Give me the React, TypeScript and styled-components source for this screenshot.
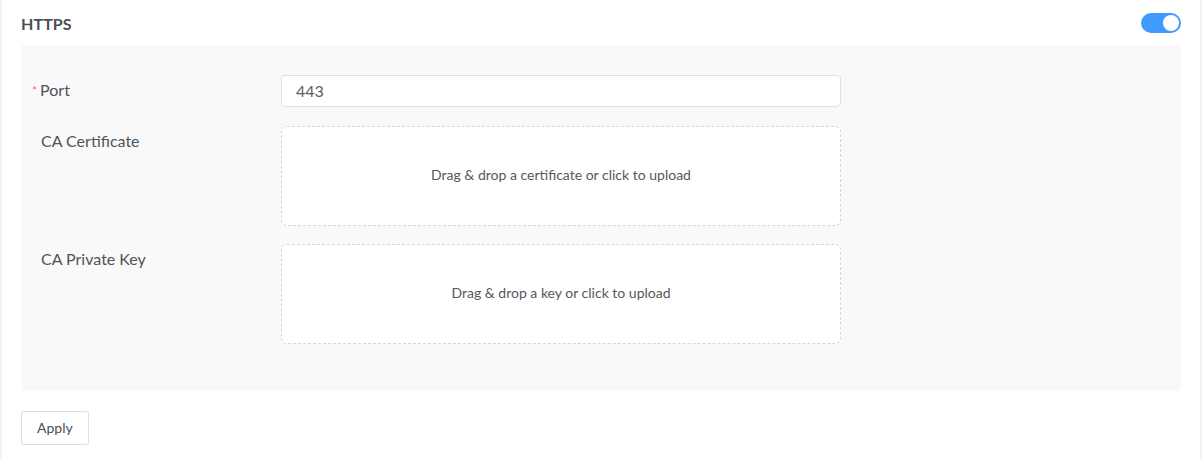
import React, { useState } from "react";
import styled, { createGlobalStyle } from "styled-components";

const Global = createGlobalStyle`
  html, body { margin: 0; padding: 0; background: #f2f3f6; }
  body { font-family: Lato, "Open Sans", "Liberation Sans", sans-serif; }
  * { box-sizing: border-box; }
`;

const Card = styled.div`
  margin: 0 2px;
  background: #ffffff;
  min-height: 459px;
  padding: 0 19px 14px;
`;

const Header = styled.div`
  height: 45px;
  display: flex;
  align-items: center;
  justify-content: space-between;
  padding-top: 1px;
`;

const Title = styled.h2`
  margin: 0;
  font-size: 16px;
  font-weight: 700;
  color: #4d4f53;
  letter-spacing: 0.1px;
`;

const Switch = styled.button<{ $on: boolean }>`
  width: 40px;
  height: 20px;
  border-radius: 10px;
  border: none;
  padding: 2px;
  background: ${(p) => (p.$on ? "#3f9cfd" : "#dcdfe6")};
  display: flex;
  justify-content: ${(p) => (p.$on ? "flex-end" : "flex-start")};
  cursor: pointer;
`;

const Knob = styled.span`
  width: 16px;
  height: 16px;
  border-radius: 50%;
  background: #fff;
`;

const Panel = styled.div`
  background: #f9f9f9;
  border-radius: 4px;
  padding: 30px 0 47px;
  display: flex;
  flex-direction: column;
  gap: 18px;
`;

const Row = styled.div<{ $center?: boolean }>`
  display: grid;
  grid-template-columns: 260px 560px;
  align-items: ${(p) => (p.$center ? "center" : "start")};
  margin-bottom: ${(p) => (p.$center ? "1px" : "0")};
`;

const Label = styled.label`
  padding-left: 20px;
  padding-bottom: 2px;
  font-size: 16px;
  line-height: 29px;
  color: #505358;
`;

const Star = styled.span`
  color: #f56c6c;
  font-size: 12px;
  margin-left: -9px;
  margin-right: 3px;
  vertical-align: 1px;
`;

const Input = styled.input`
  height: 32px;
  width: 560px;
  border: 1px solid #dcdfe6;
  border-radius: 4px;
  background: #fff;
  padding: 0 14px 1px;
  font-family: inherit;
  font-size: 16px;
  color: #5a5d63;
  outline: none;
`;

const Drop = styled.div`
  height: 100px;
  width: 560px;
  border: 1px dashed #d6d6d6;
  border-radius: 6px;
  background: #fff;
  display: flex;
  align-items: center;
  justify-content: center;
  padding-bottom: 3px;
  font-size: 14px;
  color: #55585e;
  cursor: pointer;
`;

const Footer = styled.div`
  padding-top: 20px;
`;

const Button = styled.button`
  height: 34px;
  padding: 0 15px 2px;
  border: 1px solid #dcdfe6;
  border-radius: 3px;
  background: #fff;
  font-family: inherit;
  font-size: 14px;
  color: #4d4f53;
  cursor: pointer;
`;

export default function App() {
  const [on, setOn] = useState(true);
  return (
    <>
      <Global />
      <Card>
        <Header>
          <Title>HTTPS</Title>
          <Switch $on={on} onClick={() => setOn(!on)} aria-label="HTTPS">
            <Knob />
          </Switch>
        </Header>
        <Panel>
          <Row $center>
            <Label>
              <Star>*</Star>Port
            </Label>
            <Input defaultValue="443" />
          </Row>
          <Row>
            <Label>CA Certificate</Label>
            <Drop>Drag &amp; drop a certificate or click to upload</Drop>
          </Row>
          <Row>
            <Label>CA Private Key</Label>
            <Drop>Drag &amp; drop a key or click to upload</Drop>
          </Row>
        </Panel>
        <Footer>
          <Button>Apply</Button>
        </Footer>
      </Card>
    </>
  );
}
